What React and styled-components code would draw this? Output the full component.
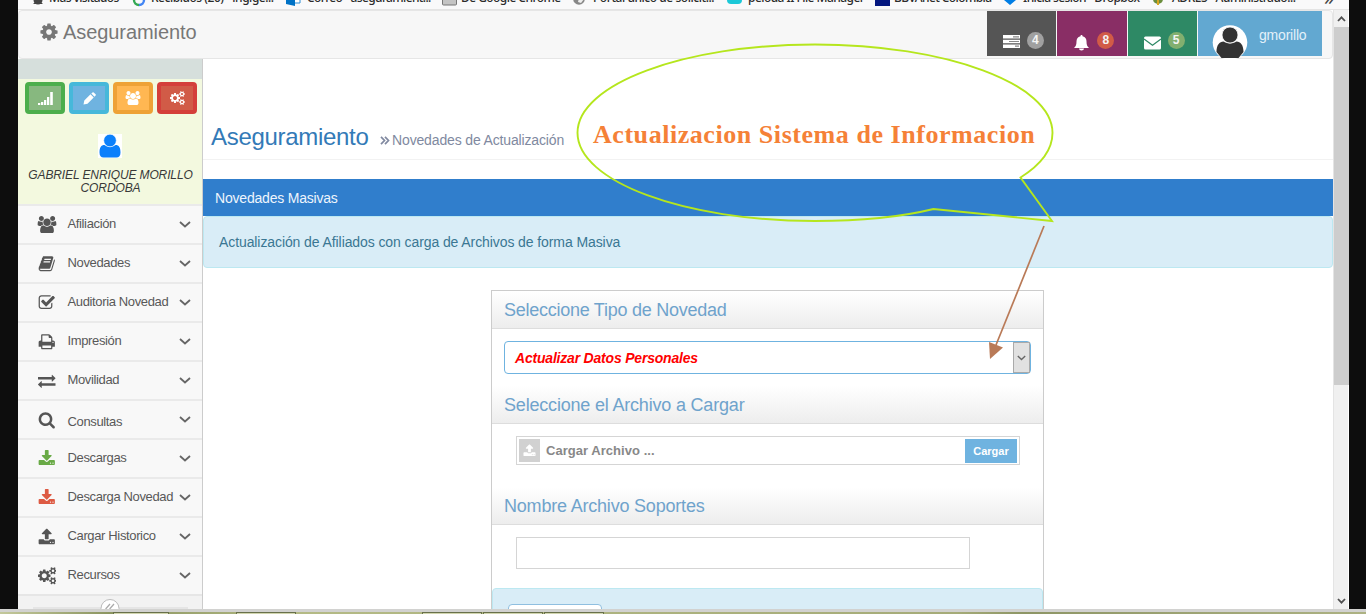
import React from 'react';
import styled, { createGlobalStyle } from 'styled-components';

const Global = createGlobalStyle`
  * { box-sizing: border-box; }
  body { margin: 0; background: #0d0d0d; font-family: "Liberation Sans", Arial, sans-serif; overflow: hidden; }
`;

const ICONS = {
  cog: [1792, 'M1152 896q0-106-75-181t-181-75-181 75-75 181 75 181 181 75 181-75 75-181zm512-109v222q0 12-8 23t-20 13l-185 28q-19 54-39 91 35 50 107 138 10 12 10 25t-9 23q-27 37-99 108t-94 71q-12 0-26-9l-138-108q-44 23-91 38-16 136-29 186-7 28-36 28h-222q-14 0-24.5-8.5t-11.5-21.5l-28-184q-49-16-90-37l-141 107q-10 9-25 9-14 0-25-11-126-114-165-168-7-10-7-23 0-12 8-23 15-21 51-66.5t54-70.5q-27-50-41-99l-183-27q-13-2-21-12.5t-8-23.5v-222q0-12 8-23t19-13l186-28q14-46 39-92-40-57-107-138-10-12-10-24 0-10 9-23 26-36 98.5-107.5t94.5-71.5q13 0 26 10l138 107q44-23 91-38 16-136 29-186 7-28 36-28h222q14 0 24.5 8.5t11.5 21.5l28 184q49 16 90 37l142-107q9-9 24-9 13 0 25 10 129 119 165 170 7 8 7 22 0 12-8 23-15 21-51 66.5t-54 70.5q26 50 41 98l183 28q13 2 21 12.5t8 23.5z'],
  users: [2048, 'M657 896q-162 5-265 128h-134q-82 0-138-40.5t-56-118.5q0-353 124-353 6 0 43.5 21t97.5 42.5 119 21.5q67 0 133-23-5 37-5 66 0 139 81 256zm1071 637q0 120-73 189.5t-194 69.5h-874q-121 0-194-69.5t-73-189.5q0-53 3.5-103.5t14-109 26.5-108.5 43-97.5 62-81 85.5-53.5 111.5-20q10 0 43 21.5t73 48 107 48 135 21.5 135-21.5 107-48 73-48 43-21.5q61 0 111.5 20t85.5 53.5 62 81 43 97.5 26.5 108.5 14 109 3.5 103.5zm-1024-1277q0 106-75 181t-181 75-181-75-75-181 75-181 181-75 181 75 75 181zm704 384q0 159-112.5 271.5t-271.5 112.5-271.5-112.5-112.5-271.5 112.5-271.5 271.5-112.5 271.5 112.5 112.5 271.5zm576 225q0 78-56 118.5t-138 40.5h-134q-103-123-265-128 81-117 81-256 0-29-5-66 66 23 133 23 59 0 119-21.5t97.5-42.5 43.5-21q124 0 124 353zm-128-609q0 106-75 181t-181 75-181-75-75-181 75-181 181-75 181 75 75 181z'],
  download: [1792, 'M1344 1344q0-26-19-45t-45-19-45 19-19 45 19 45 45 19 45-19 19-45zm256 0q0-26-19-45t-45-19-45 19-19 45 19 45 45 19 45-19 19-45zm128-224v320q0 40-28 68t-68 28h-1472q-40 0-68-28t-28-68v-320q0-40 28-68t68-28h465l135 136q58 56 136 56t136-56l136-136h464q40 0 68 28t28 68zm-325-569q17 41-14 70l-448 448q-18 19-45 19t-45-19l-448-448q-31-29-14-70 17-39 59-39h256v-448q0-26 19-45t45-19h256q26 0 45 19t19 45v448h256q42 0 59 39z'],
  upload: [1792, 'M1344 1472q0-26-19-45t-45-19-45 19-19 45 19 45 45 19 45-19 19-45zm256 0q0-26-19-45t-45-19-45 19-19 45 19 45 45 19 45-19 19-45zm128-224v320q0 40-28 68t-68 28h-1472q-40 0-68-28t-28-68v-320q0-40 28-68t68-28h427q21 56 70.5 92t110.5 36h256q61 0 110.5-36t70.5-92h427q40 0 68 28t28 68zm-325-648q-17 40-59 40h-256v448q0 26-19 45t-45 19h-256q-26 0-45-19t-19-45v-448h-256q-42 0-59-40-17-39 14-69l448-448q18-19 45-19t45 19l448 448q31 30 14 69z'],
  search: [1792, 'M1216 832q0-185-131.5-316.5t-316.5-131.5-316.5 131.5-131.5 316.5 131.5 316.5 316.5 131.5 316.5-131.5 131.5-316.5zm512 832q0 52-38 90t-90 38q-54 0-90-38l-343-342q-179 124-399 124-143 0-273.5-55.5t-225-150-150-225-55.5-273.5 55.5-273.5 150-225 225-150 273.5-55.5 273.5 55.5 225 150 150 225 55.5 273.5q0 220-124 399l343 343q37 37 37 90z'],
  check: [1792, 'M1472 930v318q0 119-84.5 203.5t-203.5 84.5h-832q-119 0-203.5-84.5t-84.5-203.5v-832q0-119 84.5-203.5t203.5-84.5h832q63 0 117 25 15 7 18 23 3 17-9 29l-49 49q-10 10-23 10-3 0-9-2-23-6-45-6h-832q-66 0-113 47t-47 113v832q0 66 47 113t113 47h832q66 0 113-47t47-113v-254q0-13 9-22l64-64q10-10 23-10 6 0 12 3 20 8 20 29zm231-489l-814 814q-24 24-57 24t-57-24l-430-430q-24-24-24-57t24-57l110-110q24-24 57-24t57 24l263 263 647-647q24-24 57-24t57 24l110 110q24 24 24 57t-24 57z'],
  print: [1792, 'M448 1536h896v-256h-896v256zm0-640h896v-384h-160q-40 0-68-28t-28-68v-160h-640v640zm1152 64q0-26-19-45t-45-19-45 19-19 45 19 45 45 19 45-19 19-45zm128 0v416q0 13-9.5 22.5t-22.5 9.5h-224v160q0 40-28 68t-68 28h-960q-40 0-68-28t-28-68v-160h-224q-13 0-22.5-9.5t-9.5-22.5v-416q0-79 56.5-135.5t135.5-56.5h64v-544q0-40 28-68t68-28h672q40 0 88 20t76 48l152 152q28 28 48 76t20 88v256h64q79 0 135.5 56.5t56.5 135.5z'],
  exchange: [1792, 'M1792 1184v192q0 13-9.5 22.5t-22.5 9.5h-1376v192q0 13-9.5 22.5t-22.5 9.5q-12 0-24-10l-319-320q-9-9-9-22 0-14 9-23l320-320q9-9 23-9 13 0 22.5 9.5t9.5 22.5v192h1376q13 0 22.5 9.5t9.5 22.5zm0-544q0 14-9 23l-320 320q-9 9-23 9-13 0-22.5-9.5t-9.5-22.5v-192h-1376q-13 0-22.5-9.5t-9.5-22.5v-192q0-13 9.5-22.5t22.5-9.5h1376v-192q0-14 9-23t23-9q12 0 24 10l319 319q9 9 9 23z'],
  book: [1792, 'M1703 478q40 57 18 129l-275 906q-19 64-76.5 107.5t-122.5 43.5h-923q-77 0-148.5-53.5t-99.5-131.5q-24-67-2-127 0-4 3-27t4-37q1-8-3-21.5t-3-19.5q2-11 8-21t16.5-23.5 16.5-23.5q23-38 45-91.5t30-91.5q3-10 .5-30t-.5-28q3-11 17-28t17-23q21-36 42-92t25-90q1-9-2.5-32t.5-28q4-13 22-30.5t22-22.5q19-26 42.5-84.5t27.5-96.5q1-8-3-25.5t-2-26.5q2-8 9-18t18-23 17-21q8-12 16.5-30.5t15-35 16-36 19.5-32 26.5-23.5 36-11.5 47.5 5.5l-1 3q38-9 51-9h761q74 0 114 56t18 130l-274 906q-36 119-71.5 153.5t-128.5 34.5h-869q-27 0-38 15-11 16-1 43 24 70 144 70h923q29 0 56-15.5t35-41.5l300-987q7-22 5-57 38 15 59 43zm-1064 2q-4 13 2 22.5t20 9.5h608q13 0 25.5-9.5t16.5-22.5l21-64q4-13-2-22.5t-20-9.5h-608q-13 0-25.5 9.5t-16.5 22.5zm-83 256q-4 13 2 22.5t20 9.5h608q13 0 25.5-9.5t16.5-22.5l21-64q4-13-2-22.5t-20-9.5h-608q-13 0-25.5 9.5t-16.5 22.5z'],
  cogs: [1920, 'M896 896q0-106-75-181t-181-75-181 75-75 181 75 181 181 75 181-75 75-181zm768 512q0-52-38-90t-90-38-90 38-38 90q0 53 37.5 90.5t90.5 37.5 90.5-37.5 37.5-90.5zm0-1024q0-52-38-90t-90-38-90 38-38 90q0 53 37.5 90.5t90.5 37.5 90.5-37.5 37.5-90.5zm-384 421v185q0 10-7 19.5t-16 10.5l-155 24q-11 35-32 76 34 48 90 115 7 11 7 20 0 12-7 19-23 30-82.5 89.5t-78.5 59.5q-11 0-21-7l-115-90q-37 19-77 31-11 108-23 155-7 24-30 24h-186q-11 0-20-7.5t-10-17.5l-23-153q-34-10-75-31l-118 89q-7 7-20 7-11 0-21-8-144-133-144-160 0-9 7-19 10-14 41-53t47-61q-23-44-35-82l-152-24q-10-1-17-9.5t-7-19.5v-185q0-10 7-19.5t16-10.5l155-24q11-35 32-76-34-48-90-115-7-11-7-20 0-12 7-20 22-30 82-89t79-59q11 0 21 7l115 90q34-18 77-32 11-108 23-154 7-24 30-24h186q11 0 20 7.5t10 17.5l23 153q34 10 75 31l118-89q8-7 20-7 11 0 21 8 144 133 144 160 0 8-7 19-12 16-42 54t-45 60q23 48 34 82l152 23q10 2 17 10.5t7 19.5zm640 533v140q0 16-149 31-12 27-30 52 51 113 51 138 0 4-4 7-122 71-124 71-8 0-46-47t-52-68q-20 2-30 2t-30-2q-14 21-52 68t-46 47q-2 0-124-71-4-3-4-7 0-25 51-138-18-25-30-52-149-15-149-31v-140q0-16 149-31 13-29 30-52-51-113-51-138 0-4 4-7 4-2 35-20t59-34 30-16q8 0 46 46.5t52 67.5q20-2 30-2t30 2q51-71 92-112l6-2q4 0 124 70 4 3 4 7 0 25-51 138 17 23 30 52 149 15 149 31zm0-1024v140q0 16-149 31-12 27-30 52 51 113 51 138 0 4-4 7-122 71-124 71-8 0-46-47t-52-68q-20 2-30 2t-30-2q-14 21-52 68t-46 47q-2 0-124-71-4-3-4-7 0-25 51-138-18-25-30-52-149-15-149-31v-140q0-16 149-31 13-29 30-52-51-113-51-138 0-4 4-7 4-2 35-20t59-34 30-16q8 0 46 46.5t52 67.5q20-2 30-2t30 2q51-71 92-112l6-2q4 0 124 70 4 3 4 7 0 25-51 138 17 23 30 52 149 15 149 31z'],
};

const Icon = ({ name, size }) => {
  const [w, d] = ICONS[name];
  return (
    <svg viewBox={`0 0 ${w} 1792`} width={(size * w) / 1792} height={size} fill="currentColor">
      <path d={d} />
    </svg>
  );
};

const Screen = styled.div`
  position: relative;
  width: 1366px;
  height: 614px;
  overflow: hidden;
  display: flex;
  flex-direction: column;
`;
const Browser = styled.div`
  flex: 1;
  min-height: 0;
  margin: 0 17px 0 18px;
  background: #fff;
  display: flex;
  flex-direction: column;
  overflow: hidden;
`;
const Bookmarks = styled.div`
  flex: none;
  height: 10px;
  background: #f9f9fa;
  border-bottom: 1px solid #e4e4e4;
  display: flex;
  align-items: flex-end;
  padding-left: 14px;
  overflow: hidden;
`;
const Bookmark = styled.div`
  flex: none;
  width: ${(p) => p.$w}px;
  height: 18px;
  display: flex;
  white-space: nowrap;
  font: 500 12px/18px "Noto Sans", "Open Sans", sans-serif;
  letter-spacing: ${(p) => p.$ls || 0}px;
  color: #2b2b2b;
  margin-bottom: 2px;
  svg { flex: none; margin-right: ${(p) => p.$gap}px; }
`;
const MoreMarks = styled.span`
  height: 19px;
  font: 20px/16px "Noto Sans", sans-serif;
  color: #444;
`;
const Viewport = styled.div`
  flex: 1;
  min-height: 0;
  display: flex;
`;
const Page = styled.div`
  width: 1315px;
  display: flex;
  flex-direction: column;
`;
const Navbar = styled.header`
  flex: none;
  height: 49px;
  background: #f7f7f7;
  border: 1px solid #e6e6e6;
  border-radius: 4px;
  display: flex;
  justify-content: space-between;
  padding: 0 10px 0 20px;
`;
const Brand = styled.div`
  display: flex;
  align-items: center;
  height: 42px;
  gap: 4px;
  font-size: 20px;
  letter-spacing: -0.07px;
  color: #777;
`;
const NavTiles = styled.div`
  display: flex;
  gap: 1px;
  height: 45px;
`;
const Tile = styled.div`
  width: ${(p) => p.$w || 69.4}px;
  background: ${(p) => p.$bg};
  color: #fff;
  display: flex;
  align-items: flex-start;
  padding: ${(p) => p.$pad || '21px 0 0 16px'};
  gap: 7px;
  svg { margin-top: ${(p) => (p.$w ? 0 : 3)}px; flex: none; }
`;
const Count = styled.span`
  width: 17px;
  height: 17px;
  border-radius: 50%;
  background: ${(p) => p.$bg};
  font-size: 12px;
  line-height: 17px;
  font-weight: 700;
  text-align: center;
  color: #f4f4f4;
`;
const UserName = styled.span`
  font-size: 14px;
  letter-spacing: -0.2px;
  color: #e3f1fa;
  padding: 2px 0 0 4px;
  line-height: 16px;
`;
const Body = styled.div`
  flex: 1;
  min-height: 0;
  display: flex;
`;
const Sidebar = styled.aside`
  flex: none;
  width: 185px;
  background: #f2f2f2;
  border-right: 1px solid #ccc;
  overflow: hidden;
`;
const SideTop = styled.div`
  height: 20px;
  background: #d6dfdc;
`;
const Profile = styled.div`
  height: 125px;
  background: #f3f9df;
  padding: 3px 0 0 7px;
`;
const Shortcuts = styled.div`
  display: flex;
  gap: 4px;
`;
const Shortcut = styled.button`
  width: 40px;
  height: 32px;
  padding: 0;
  border: 4px solid ${(p) => p.$edge};
  border-radius: 4px;
  background: ${(p) => p.$bg};
  color: #fff;
  display: flex;
  align-items: center;
  justify-content: center;
`;
const Person = styled.div`
  width: 24px;
  height: 24px;
  margin: 20px 0 0 73px;
  background: #fff;
  svg { display: block; }
`;
const PersonName = styled.div`
  margin: 11px 6px 0 0;
  text-align: center;
  font-size: 12px;
  font-style: italic;
  line-height: 13px;
  letter-spacing: -0.12px;
  white-space: nowrap;
  color: #393939;
`;
const MenuRow = styled.div`
  height: 39.06px;
  border-top: 2px solid #eaeaea;
  background: #f8f8f8;
  display: flex;
  align-items: center;
  color: #585858;
`;
const MenuIcon = styled.span`
  width: 50px;
  padding-left: 8px;
  display: flex;
  justify-content: center;
  color: ${(p) => p.$c || '#555'};
`;
const MenuText = styled.span`
  flex: 1;
  font-size: 13px;
  letter-spacing: -0.36px;
  white-space: nowrap;
  margin-left: -0.5px;
  padding-top: ${(p) => (p.$low ? 4 : 0)}px;
  padding-bottom: ${(p) => (p.$low ? 0 : 2)}px;
`;
const Chevron = styled.svg`
  flex: none;
  margin: 0 11px 0 0;
`;
const Collapse = styled.div`
  height: 30px;
  border-top: 2px solid #e6e6e6;
  display: flex;
  justify-content: center;
  padding-top: 3px;
`;
const Main = styled.main`
  flex: 1;
  min-width: 0;
  display: flex;
  flex-direction: column;
`;
const Heading = styled.div`
  height: 101px;
  margin-bottom: 19px;
  padding: 62px 0 0 8px;
  border-bottom: 1px solid #f2f2f2;
  display: flex;
  align-items: baseline;
  h1 { margin: 0 11px 0 0; font-size: 24px; line-height: 32px; font-weight: 400; letter-spacing: -0.3px; color: #337ab7; }
`;
const Sub = styled.span`
  font-size: 14px;
  letter-spacing: -0.15px;
  color: #8089a0;
  svg { margin-right: 2.5px; }
`;
const Band = styled.div`
  height: 37px;
  padding-left: 12px;
  background: #307ecc;
  color: #eef5fc;
  font-size: 14px;
  letter-spacing: -0.2px;
  line-height: 38px;
`;
const Info = styled.div`
  height: 52px;
  padding-left: 15px;
  background: #d9edf7;
  border: 1px solid #bce8f1;
  border-radius: 4px;
  color: #3a7793;
  font-size: 14px;
  letter-spacing: -0.09px;
  line-height: 51px;
`;
const Card = styled.section`
  width: 553px;
  flex: 1;
  min-height: 0;
  overflow: hidden;
  margin: 22px 0 0 288px;
  border: 1px solid #ccc;
  border-bottom: 0;
`;
const CardTitle = styled.h2`
  margin: ${(p) => p.$mt || 0}px 0 0;
  height: 38px;
  padding-left: 12px;
  background: linear-gradient(#fff, #ededed);
  border-bottom: 1px solid #ddd;
  color: #6fa3cc;
  font-size: 18px;
  font-weight: 400;
  letter-spacing: ${(p) => p.$ls}px;
  line-height: 38px;
`;
const Select = styled.div`
  margin: 12px 12px 0;
  height: 33px;
  border: 1px solid #6fb3e0;
  border-radius: 4px;
  display: flex;
  justify-content: space-between;
  padding-left: 10px;
  color: #f00;
  font: italic 700 14px/32px "Liberation Sans", Arial, sans-serif;
  letter-spacing: -0.2px;
`;
const SelectButton = styled.span`
  width: 17px;
  border: 1px solid #aaa;
  background: #e1e1e1;
  display: flex;
  align-items: center;
  justify-content: center;
`;
const FileInput = styled.div`
  margin: 12px 23px 0 24px;
  height: 29px;
  border: 1px solid #d5d5d5;
  padding: 2px;
  display: flex;
  align-items: center;
  color: #888;
  font-weight: 700;
  font-size: 13px;
  letter-spacing: 0.04px;
`;
const FileIcon = styled.span`
  width: 21px;
  height: 23px;
  margin-right: 6px;
  background: #d1d1d1;
  color: #fff;
  display: flex;
  align-items: center;
  justify-content: center;
`;
const FileButton = styled.button`
  margin-left: auto;
  width: 52px;
  height: 24px;
  padding: 0;
  border: 0;
  background: #6fb3e0;
  color: #fff;
  font: 700 11px "Liberation Sans", Arial, sans-serif;
`;
const TextInput = styled.div`
  margin: 12px 0 19px 24px;
  width: 454px;
  height: 32px;
  border: 1px solid #d5d5d5;
`;
const Actions = styled.div`
  height: 50px;
  border: 1px solid #bce8f1;
  border-radius: 4px;
  background: #d9edf7;
  padding: 15px 0 0 15px;
`;
const ActionButton = styled.div`
  width: 94px;
  height: 30px;
  border: 1px solid #8fbfe0;
  border-radius: 4px;
  background: #fff;
`;
const Scrollbar = styled.div`
  width: 15px;
  height: 600px;
  background: #f0f0f0;
  border-left: 1px solid #e4e4e4;
  display: flex;
  flex-direction: column;
  align-items: center;
`;
const ScrollArrow = styled.svg`
  flex: none;
  margin: ${(p) => p.$m};
`;
const Thumb = styled.div`
  width: 15px;
  height: 358px;
  background: #cdcdcd;
`;
const Shelf = styled.footer`
  flex: none;
  height: 5px;
  border-top: 3px solid #d2d2d0;
  background: linear-gradient(90deg, #c3c89b 0, #8b9560 8%, #b4ba85 22%, #a5ab78 70%, #8d9565 75%, #adb283 100%);
  display: flex;
  padding-left: 113px;
`;
const ShelfTab = styled.span`
  width: ${(p) => p.$w}px;
  margin-right: ${(p) => p.$mr || 1}px;
  border: 1px solid #68704a;
  border-bottom: 0;
  background: #d0d4ae;
`;
const Annotation = styled.svg`
  position: absolute;
  inset: 0;
  pointer-events: none;
`;
const CalloutText = styled.div`
  position: absolute;
  left: 593px;
  top: 120px;
  font: 700 26px/30px "Liberation Serif", "Times New Roman", serif;
  letter-spacing: 0.55px;
  white-space: nowrap;
  color: #f58137;
`;

const marks = [
  { t: 'Más visitados', w: 101, gap: 5, ls: -0.6, icon: <g fill="#444"><circle cx="6" cy="9" r="4.5" /><path d="M1 13l3-3 2 3zM11 13l-3-3-1 3z" /></g> },
  { t: 'Recibidos (20) - ingige...', w: 153, gap: 6, ls: -0.47, icon: <g fill="none" strokeWidth="2.4"><path d="M1 9a5 5 0 0 0 5 5" stroke="#34a853" /><path d="M6 14a5 5 0 0 0 5-5" stroke="#4285f4" /></g> },
  { t: 'Correo - aseguramient...', w: 156, gap: 6, ls: -0.63, icon: <g><path d="M5 6h9v6h-9z" fill="#fff" stroke="#2a8dd4" /><path d="M0 4h9v11l-9-2z" fill="#0072c6" /></g> },
  { t: 'De Google Chrome', w: 131, gap: 4, ls: -0.55, icon: <rect x=".5" y="3" width="14" height="11" rx="1" fill="#c4c4c4" stroke="#777" /> },
  { t: 'Portal único de solicit...', w: 154, gap: 8, ls: -0.45, icon: <g><circle cx="6" cy="8" r="5.8" fill="#888" /><path d="M6 7l5 1-3 4-3-1z" fill="#eee" /></g> },
  { t: 'peloda II File Manager', w: 148, gap: 6, ls: -0.55, icon: <rect y="3" width="15" height="10" rx="4" fill="#1cc8d8" /> },
  { t: 'BBVAnet Colombia', w: 129, gap: 4, ls: -0.6, icon: <rect y="0" width="15" height="15" fill="#04177f" /> },
  { t: 'Inicia sesión - Dropbox', w: 148, gap: 7, ls: -0.6, icon: <path d="M0 9l4-2 2 1 2-1 4 2-6 5z" fill="#007ee5" /> },
  { t: 'ADRES - Administrado...', w: 172, gap: 8, ls: -0.5, icon: <g><path d="M1 8a5 5 0 0 0 10 0z" fill="#6b8e3d" /><path d="M5 8h2v6h-2z" fill="#d9a520" /></g> },
];

const menu = [
  { t: 'Afiliación', i: 'users' },
  { t: 'Novedades', i: 'book' },
  { t: 'Auditoria Novedad', i: 'check' },
  { t: 'Impresión', i: 'print' },
  { t: 'Movilidad', i: 'exchange' },
  { t: 'Consultas', i: 'search', low: true },
  { t: 'Descargas', i: 'download', c: '#69aa46' },
  { t: 'Descarga Novedad', i: 'download', c: '#dd5a43' },
  { t: 'Cargar Historico', i: 'upload' },
  { t: 'Recursos', i: 'cogs' },
];

export default function App() {
  return (
    <Screen>
      <Global />
      <Browser>
        <Bookmarks>
          {marks.map((m, n) => (
            <Bookmark key={m.t} $w={m.w} $gap={m.gap} $ls={m.ls}>
              <svg width={[2, 3, 5, 6].includes(n) ? 15 : 12} height="18" viewBox={`0 -5 ${[2, 3, 5, 6].includes(n) ? 15 : 12} 18`} overflow="visible"><g transform="translate(0 -3)">{m.icon}</g></svg>
              {m.t}
            </Bookmark>
          ))}
          <MoreMarks>»</MoreMarks>
        </Bookmarks>
        <Viewport>
          <Page>
            <Navbar>
              <Brand><Icon name="cog" size={20} />Aseguramiento</Brand>
              <NavTiles>
                <Tile $bg="#555">
                  <svg width="17" height="13" viewBox="0 0 17 13"><path d="M0 0h17v3.5H0zM0 4.8h17v3.5H0zM0 9.5h17V13H0z" fill="#fff" /><path d="M10 1.8h6M6 6.5h10M12 11.2h4" stroke="#888" strokeWidth="1.2" /></svg>
                  <Count $bg="#a0a0a0">4</Count>
                </Tile>
                <Tile $bg="#892e65">
                  <svg width="17" height="17" viewBox="0 0 17 17" fill="#fff"><path d="M8.500 0c.8 0 1 .5 1 1.200C12.500 2 13.500 4 13.500 6.500c0 3.500.8 5 2.500 6.500H1c1.700-1.500 2.500-3 2.500-6.500C3.500 4 4.500 2 7.500 1.200 7.500.5 7.700 0 8.500 0zM6 13.500h5a2.500 2 0 0 1-5 0z" /></svg>
                  <Count $bg="#d15b47">8</Count>
                </Tile>
                <Tile $bg="#2e8965">
                  <svg width="17" height="16" viewBox="0 0 17 16"><rect y="1.500" width="17" height="13" rx="1.500" fill="#fff" /><path d="M0 4l8.500 6.300L17 4" fill="none" stroke="#2e8965" strokeWidth="1.200" /></svg>
                  <Count $bg="#82af6f">5</Count>
                </Tile>
                <Tile $bg="#62a8d1" $w={124} $pad="14px 0 0 14px">
                  <svg width="36" height="36" viewBox="0 0 36 36"><circle cx="18" cy="17.500" r="17.300" fill="#fff" /><path d="M4.500 27c0-7 3-10.500 7-10.500 3.500 2.500 9.500 2.500 13 0 4 0 7 3.500 7 10.500l-5 6H9.500z" fill="#333" /><circle cx="18" cy="10" r="8" fill="#333" stroke="#fff" strokeWidth=".8" /></svg>
                  <UserName>gmorillo</UserName>
                </Tile>
              </NavTiles>
            </Navbar>
            <Body>
              <Sidebar>
                <SideTop />
                <Profile>
                  <Shortcuts>
                    <Shortcut $bg="#87b87f" $edge="#4cae4c">
                      <svg width="15" height="13" viewBox="0 0 15 13" fill="#fff"><path d="M0 11h2.300v2H0zM3 10h2.300v3H3zM6 8h2.300v5H6zM9 5h2.300v8H9zM12.200 0h2.600v13h-2.600z" /></svg>
                    </Shortcut>
                    <Shortcut $bg="#6fb3e0" $edge="#46b8da">
                      <svg width="13" height="13" viewBox="0 0 13 13" fill="#fff"><path d="M.5 12.500l.8-4L7.500 2.300l3.200 3.200-6.200 6.200zM8.300 1.500L9.500.4q.6-.5 1.200 0l1.900 1.900q.5.600 0 1.200l-1.100 1.200z" /></svg>
                    </Shortcut>
                    <Shortcut $bg="#ffb752" $edge="#eea236"><Icon name="users" size={14} /></Shortcut>
                    <Shortcut $bg="#d15b47" $edge="#d43f3a"><Icon name="cogs" size={14} /></Shortcut>
                  </Shortcuts>
                  <Person>
                    <svg width="24" height="24" viewBox="0 0 24 24" fill="#0b80fb"><path d="M1.500 18.500c0-5 1.500-7.500 5-7.500 3 2.500 8 2.500 11 0 3.500 0 5 2.500 5 7.500 0 3.500-1.500 5-4 5h-13c-2.500 0-4-1.500-4-5z" /><circle cx="12" cy="6.500" r="6.300" stroke="#fff" strokeWidth=".6" /></svg>
                  </Person>
                  <PersonName>GABRIEL ENRIQUE MORILLO<br />CORDOBA</PersonName>
                </Profile>
                {menu.map((m) => (
                  <MenuRow key={m.t}>
                    <MenuIcon $c={m.c}><Icon name={m.i} size={17.5} /></MenuIcon>
                    <MenuText $low={m.low}>{m.t}</MenuText>
                    <Chevron width="12" height="7" viewBox="0 0 12 7"><path d="M1 1l5 4.500L11 1" fill="none" stroke="#666" strokeWidth="1.800" /></Chevron>
                  </MenuRow>
                ))}
                <Collapse>
                  <svg width="155" height="20" viewBox="0 0 155 20"><path d="M0 9h155" stroke="#d8d8d8" /><circle cx="77" cy="9.500" r="9" fill="#fff" stroke="#bbb" /><path d="M77 5l-4 4.500 4 4.500M81 5l-4 4.500 4 4.500" fill="none" stroke="#aaa" strokeWidth="1.300" /></svg>
                </Collapse>
              </Sidebar>
              <Main>
                <Heading>
                  <h1>Aseguramiento</h1>
                  <Sub>
                    <svg width="10" height="9" viewBox="0 0 10 9"><path d="M1 .8l3.500 3.700L1 8.200M5 .8l3.500 3.700L5 8.200" fill="none" stroke="#8089a0" strokeWidth="1.700" /></svg>
                    Novedades de Actualización
                  </Sub>
                </Heading>
                <Band>Novedades Masivas</Band>
                <Info>Actualización de Afiliados con carga de Archivos de forma Masiva</Info>
                <Card>
                  <CardTitle $ls={-0.26}>Seleccione Tipo de Novedad</CardTitle>
                  <Select>
                    Actualizar Datos Personales
                    <SelectButton><svg width="9" height="6" viewBox="0 0 9 6"><path d="M.8 1l3.700 3.500L8.200 1" fill="none" stroke="#666" strokeWidth="1.400" /></svg></SelectButton>
                  </Select>
                  <CardTitle $mt={12} $ls={-0.19}>Seleccione el Archivo a Cargar</CardTitle>
                  <FileInput>
                    <FileIcon><Icon name="upload" size={13} /></FileIcon>
                    Cargar Archivo ...
                    <FileButton>Cargar</FileButton>
                  </FileInput>
                  <CardTitle $mt={22} $ls={-0.2}>Nombre Archivo Soportes</CardTitle>
                  <TextInput />
                  <Actions><ActionButton /></Actions>
                </Card>
              </Main>
            </Body>
          </Page>
          <Scrollbar>
            <ScrollArrow $m="6px 0 5px" width="9" height="6" viewBox="0 0 9 6"><path d="M1 5l3.500-3.700L8 5" fill="none" stroke="#505050" strokeWidth="1.800" /></ScrollArrow>
            <Thumb />
            <ScrollArrow $m="213px 0 0" width="9" height="6" viewBox="0 0 9 6"><path d="M1 1l3.500 3.700L8 1" fill="none" stroke="#505050" strokeWidth="1.800" /></ScrollArrow>
          </Scrollbar>
        </Viewport>
      </Browser>
      <Shelf>
        <ShelfTab $w={56} $mr={67} />
        <ShelfTab $w={60} $mr={126} />
        <ShelfTab $w={60} />
        <ShelfTab $w={60} />
        <ShelfTab $w={60} />
      </Shelf>
      <Annotation width="1366" height="614" viewBox="0 0 1366 614">
        <path d="M933.500 209C903 216.500 859 221 815 221C684 221 577.500 181.500 577.500 132.800C577.500 84 684 44.500 815 44.500C946 44.500 1052.500 84 1052.500 132.800C1052.500 149.500 1040.500 165 1020.500 177.500L1052 221Z" fill="none" stroke="#b5e61d" strokeWidth="1.900" />
        <path d="M1044 226L996 345" stroke="#b97a57" strokeWidth="1.700" />
        <path d="M990 359l-1-17 14 5.500z" fill="#b97a57" />
      </Annotation>
      <CalloutText>Actualizacion Sistema de Informacion</CalloutText>
    </Screen>
  );
}
